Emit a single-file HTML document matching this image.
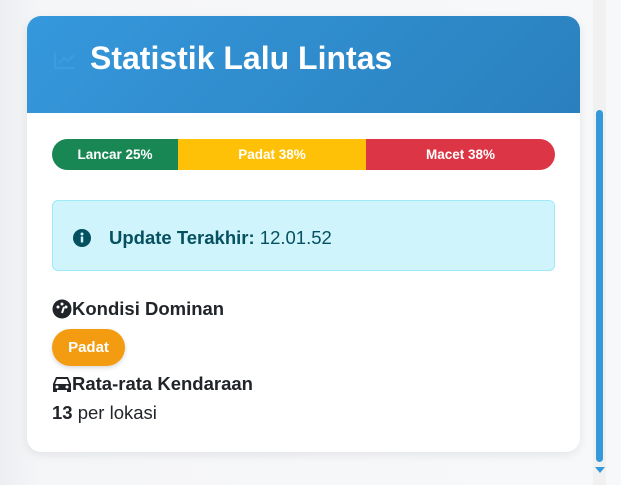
<!DOCTYPE html>
<html><head><meta charset="utf-8"><style>
*{box-sizing:border-box;margin:0;padding:0}
html,body{width:621px;height:485px;overflow:hidden}
body{background:linear-gradient(90deg,#eceef1 0,#f5f6f8 40px,#f7f8fa 100%);font-family:"Liberation Sans","DejaVu Sans",sans-serif;color:#212529;position:relative}
.card{position:absolute;left:27px;top:16px;width:553px;height:436px;background:#fff;border-radius:14px;box-shadow:0 3px 10px rgba(0,0,0,.08);overflow:hidden}
.hdr{height:97px;background:linear-gradient(135deg,#3598dc,#2a80bd);display:flex;align-items:flex-start;padding-left:26px;padding-top:24px}
.hdr svg{margin-top:10px}
.hdr h1{color:#fff;font-size:32px;font-weight:bold;margin-left:13px;letter-spacing:0}
.bar{position:absolute;left:25px;top:123px;width:503px;height:31px;border-radius:16px;overflow:hidden;display:flex;color:#fff;font-weight:bold;font-size:13.5px}
.bar div{display:flex;align-items:center;justify-content:center}
.info{position:absolute;left:25px;top:184px;width:503px;height:71px;background:#cff4fc;border:1px solid #9eeaf9;border-radius:6px;display:flex;align-items:center;padding-left:20px;padding-top:5px;color:#055160;font-size:18.5px}
.sec{position:absolute;left:25px;font-size:18.5px;font-weight:bold;display:flex;align-items:center}
.badge{position:absolute;left:25px;top:313px;width:73px;height:37px;border-radius:19px;background:#f39c12;color:#fff;font-weight:bold;font-size:15px;display:flex;align-items:center;justify-content:center;box-shadow:0 2px 5px rgba(0,0,0,.15)}
.track{position:absolute;left:593px;top:0;width:13px;height:485px;background:#f1f1f1}
.thumb{position:absolute;left:596px;top:110px;width:7px;height:352px;background:#3498db;border-radius:4px}
</style></head><body>
<div class="card">
 <div class="hdr">
  <svg width="24" height="20" viewBox="0 0 24 20"><path d="M2 2v16h20" stroke="#3a9de0" stroke-width="2.5" fill="none"/><path d="M6 13l5-5 4 3 6-6" stroke="#3a9de0" stroke-width="2.5" fill="none"/></svg>
  <h1>Statistik Lalu Lintas</h1>
 </div>
 <div class="bar"><div style="width:126px;background:#198754">Lancar 25%</div><div style="width:188px;background:#ffc107">Padat 38%</div><div style="flex:1;background:#dc3545">Macet 38%</div></div>
 <div class="info"><svg width="18" height="18" viewBox="0 0 18 18"><circle cx="9" cy="9" r="9" fill="#055160"/><circle cx="9" cy="5" r="1.5" fill="#cff4fc"/><rect x="7.8" y="7.5" width="2.4" height="6" fill="#cff4fc"/></svg><span style="margin-left:18px"><b>Update Terakhir:</b> 12.01.52</span></div>
 <div class="sec" style="top:282px"><svg width="20" height="20" viewBox="0 0 20 20"><circle cx="10" cy="10" r="9.5" fill="#212529"/><circle cx="6" cy="8" r="1.5" fill="#fff"/><circle cx="10" cy="5" r="1.5" fill="#fff"/><circle cx="14" cy="8" r="1.5" fill="#fff"/><path d="M10 14l2-6" stroke="#fff" stroke-width="2"/></svg>Kondisi Dominan</div>
 <div class="badge">Padat</div>
 <div class="sec" style="top:357px"><svg width="20" height="18" viewBox="0 0 20 18"><path d="M4 2h12l3 7v8h-4v-2H5v2H1V9z" fill="#212529"/><path d="M5 4h10l2 5H3z" fill="#fff"/><circle cx="5" cy="12" r="1.5" fill="#fff"/><circle cx="15" cy="12" r="1.5" fill="#fff"/></svg>Rata-rata Kendaraan</div>
 <div style="position:absolute;left:25px;top:386px;font-size:18.5px"><b>13</b> per lokasi</div>
</div>
<div class="track"></div><div class="thumb"></div>
<svg style="position:absolute;left:595px;top:467px" width="10" height="6"><path d="M0 0h10L5 6z" fill="#3498db"/></svg>
</body></html>
